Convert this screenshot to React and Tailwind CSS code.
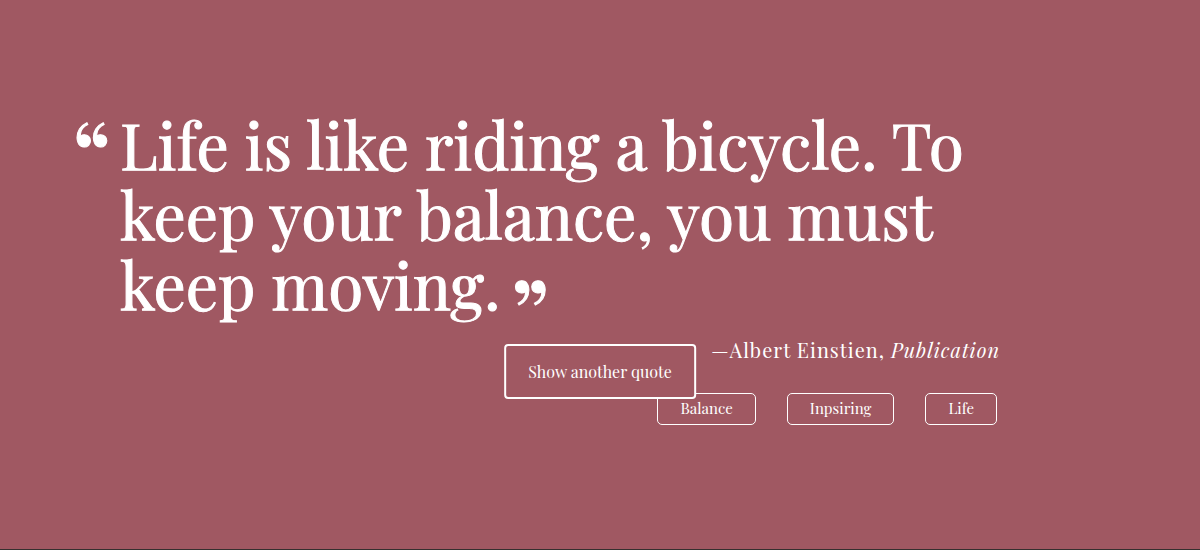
const quote = {
  text: 'Life is like riding a bicycle. To keep your balance, you must keep moving.',
  author: 'Albert Einstien',
  source: 'Publication',
  tags: ['Balance', 'Inpsiring', 'Life'],
};

export default function App() {
  return (
    <main className="flex min-h-screen flex-col justify-center border-b border-[#36302f] bg-[#a05862] pr-[200px] pb-[15px] pl-[120px] font-['Playfair_Display','Liberation_Serif',serif] text-white">
      <blockquote className="relative text-[64px] leading-[70px] [-webkit-text-stroke:1px_white]">
        <span aria-hidden="true" className="absolute top-2 right-full mr-2 text-[96px]">“</span>
        {quote.text}
        <span aria-hidden="true" className="relative top-10 ml-2.5 text-[96px] leading-[0]">”</span>
      </blockquote>
      <p className="mt-[19px] text-right text-xl leading-6 tracking-[1px]">
        —{quote.author}, <cite className="italic">{quote.source}</cite>
      </p>
      <ul className="mt-[31px] mr-[3px] flex justify-end gap-[31px]">
        {quote.tags.map((tag) => (
          <li key={tag} className="rounded-[5px] border border-white px-[22px] pb-0.5 text-[15px] leading-7">
            {tag}
          </li>
        ))}
      </ul>
      <button
        type="button"
        className="absolute top-[344px] left-1/2 -translate-x-1/2 cursor-pointer rounded border-2 border-white bg-[#a05862] px-[22px] py-3 text-base leading-[27px] whitespace-nowrap"
      >
        Show another quote
      </button>
    </main>
  );
}
